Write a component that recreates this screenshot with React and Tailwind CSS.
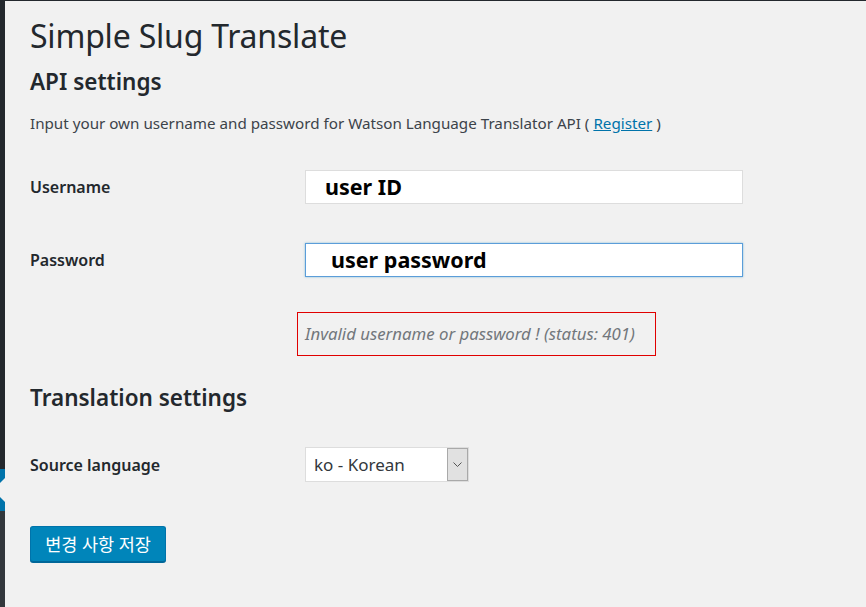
import React from 'react';

const font = { fontFamily: '"Noto Sans", "Noto Sans CJK KR", sans-serif' };

function SideStrip() {
    return (
        <div className="w-[5px] shrink-0 flex flex-col">
            <div className="h-[468px] bg-[#23282d]" />
            <div className="h-[42px] bg-[#0073aa] relative overflow-hidden">
                <svg className="absolute left-0 top-[9px]" width="5" height="24" viewBox="0 0 5 24">
                    <polygon points="5,0 -7,12 5,24" fill="#f1f1f1" />
                </svg>
            </div>
            <div className="flex-1 bg-[#32373c]" />
        </div>
    );
}

function FormRow({ label, children }) {
    return (
        <div className="flex items-center">
            <div className="w-[275px] text-[16px] font-semibold text-[#23282d]">{label}</div>
            {children}
        </div>
    );
}

export default function App() {
    return (
        <div className="min-h-screen h-[607px] flex bg-[#f1f1f1] border-t border-[#23282d]" style={font}>
            <SideStrip />
            <div className="flex-1 pl-[25px] pt-[13px]">
                <h1 className="h-[44px] leading-[44px] text-[32px] text-[#23282d] tracking-[-0.2px]">
                    Simple Slug Translate
                </h1>
                <h2 className="mt-[9px] h-[30px] leading-[30px] text-[22.5px] font-semibold text-[#23282d]">
                    API settings
                </h2>
                <p className="mt-[16px] h-[20px] leading-[20px] text-[15.2px] text-[#3c434a]">
                    Input your own username and password for Watson Language Translator API ({' '}
                    <a href="#" className="text-[#0073aa] underline">Register</a> )
                </p>

                <div className="mt-[37px]">
                    <FormRow label="Username">
                        <div className="w-[438px] h-[34px] bg-white border border-[#dddddd] flex items-center pl-[19px] text-[21.5px] font-bold text-black">
                            user ID
                        </div>
                    </FormRow>
                </div>
                <div className="mt-[39px]">
                    <FormRow label="Password">
                        <div className="w-[438px] h-[34px] bg-white border border-[#5b9dd9] shadow-[0_0_2px_rgba(30,140,190,0.5)] flex items-center pl-[25px] text-[21.5px] font-bold text-black">
                            user password
                        </div>
                    </FormRow>
                </div>

                <div className="mt-[35px] ml-[267px] w-[359px] h-[44px] border border-[#e00000] flex items-center pl-[7px] text-[16.8px] italic text-[#72777c]">
                    Invalid username or password ! (status: 401)
                </div>

                <h2 className="mt-[27px] h-[30px] leading-[30px] text-[22.5px] font-semibold text-[#23282d]">
                    Translation settings
                </h2>

                <div className="mt-[34px]">
                    <FormRow label="Source language">
                        <div className="w-[164px] h-[35px] bg-white border border-[#dddddd] flex">
                            <div className="flex-1 flex items-center pl-[8px] text-[17px] text-[#32373c]">
                                ko - Korean
                            </div>
                            <div className="w-[21px] bg-[#e1e1e1] border border-[#a9a9a9] flex items-center justify-center">
                                <svg width="9" height="6" viewBox="0 0 9 6">
                                    <polyline points="0.5,0.5 4.5,4.5 8.5,0.5" fill="none" stroke="#555" strokeWidth="1" />
                                </svg>
                            </div>
                        </div>
                    </FormRow>
                </div>

                <button className="mt-[44px] w-[136px] h-[36px] rounded-[3px] bg-[#0085ba] border border-[#0073aa] border-b-[#006799] shadow-[0_1px_0_#006799] text-white text-[17.5px]">
                    변경 사항 저장
                </button>
            </div>
        </div>
    );
}
